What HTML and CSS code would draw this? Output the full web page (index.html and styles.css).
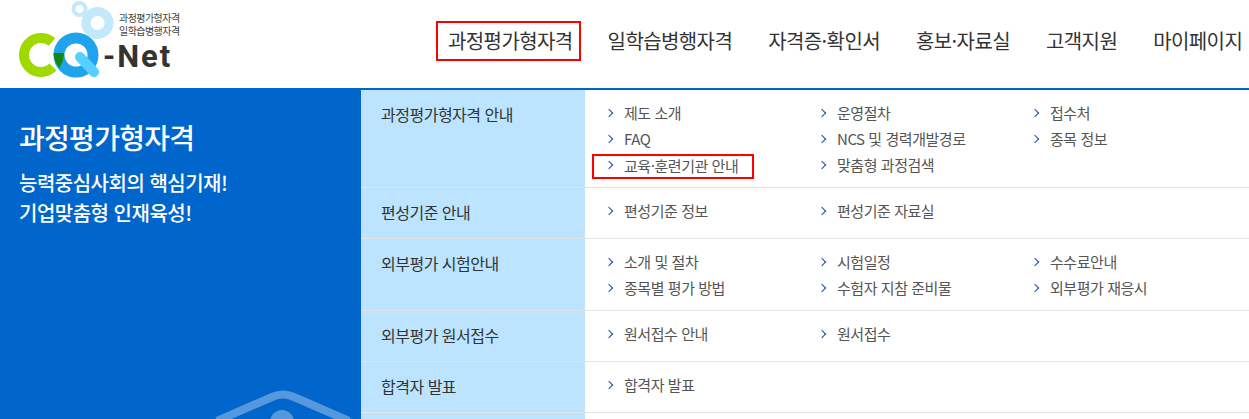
FILE: index.html
```html
<!DOCTYPE html>
<html lang="ko">
<head>
  <meta charset="UTF-8" />
  <title>CQ-Net</title>
  <link rel="stylesheet" href="styles.css">
</head>
<body>
  <header class="header">
    <a class="logo" href="#">
      <svg class="logo-mark" width="120" height="80" viewBox="0 0 120 80">
        <circle cx="79.5" cy="9" r="6" fill="none" stroke="#c4e8fb" stroke-width="4"/>
        <circle cx="97.5" cy="23" r="11.5" fill="none" stroke="#c4e8fb" stroke-width="9"/>
        <path d="M52 42 A17 17 0 1 0 53 67" fill="none" stroke="#9fd900" stroke-width="10"/>
        <circle cx="76" cy="55" r="17" fill="none" stroke="#1fa3ec" stroke-width="11"/>
        <path d="M53.5 53 L64 53 Q63.5 61 59.5 68 Q54 62 53.5 53 Z" fill="#138a0b"/>
        <line x1="80" y1="57" x2="94" y2="72" stroke="#55d0ff" stroke-width="10" stroke-linecap="round"/>
      </svg>
      <span class="logo-sub">과정평가형자격<br>일학습병행자격</span>
      <span class="logo-name">-Net</span>
    </a>
    <nav class="gnb">
      <a class="gnb-item gnb-on" href="#">과정평가형자격</a>
      <a class="gnb-item" href="#">일학습병행자격</a>
      <a class="gnb-item" href="#">자격증·확인서</a>
      <a class="gnb-item" href="#">홍보·자료실</a>
      <a class="gnb-item" href="#">고객지원</a>
      <a class="gnb-item" href="#">마이페이지</a>
    </nav>
  </header>

  <div class="panel">
    <aside class="intro">
      <h2>과정평가형자격</h2>
      <p>능력중심사회의 핵심기재!<br>기업맞춤형 인재육성!</p>
      <svg class="intro-icon" width="140" height="30" viewBox="0 0 140 30">
        <path d="M3 32 L58 8 Q69 3 80 8 L135 32" fill="none" stroke="#5598de" stroke-width="8"/>
        <circle cx="68" cy="33" r="12" fill="#5598de"/>
      </svg>
    </aside>

    <div class="menu">
      <div class="menu-row row-first">
        <div class="menu-title">과정평가형자격 안내</div>
        <ul class="menu-links">
          <li><a href="#">제도 소개</a></li>
          <li><a href="#">운영절차</a></li>
          <li><a href="#">접수처</a></li>
          <li><a href="#">FAQ</a></li>
          <li><a href="#">NCS 및 경력개발경로</a></li>
          <li><a href="#">종목 정보</a></li>
          <li><a class="marked" href="#">교육·훈련기관 안내</a></li>
          <li><a href="#">맞춤형 과정검색</a></li>
        </ul>
      </div>
      <div class="menu-row">
        <div class="menu-title">편성기준 안내</div>
        <ul class="menu-links">
          <li><a href="#">편성기준 정보</a></li>
          <li><a href="#">편성기준 자료실</a></li>
        </ul>
      </div>
      <div class="menu-row row-exam">
        <div class="menu-title">외부평가 시험안내</div>
        <ul class="menu-links">
          <li><a href="#">소개 및 절차</a></li>
          <li><a href="#">시험일정</a></li>
          <li><a href="#">수수료안내</a></li>
          <li><a href="#">종목별 평가 방법</a></li>
          <li><a href="#">수험자 지참 준비물</a></li>
          <li><a href="#">외부평가 재응시</a></li>
        </ul>
      </div>
      <div class="menu-row">
        <div class="menu-title">외부평가 원서접수</div>
        <ul class="menu-links">
          <li><a href="#">원서접수 안내</a></li>
          <li><a href="#">원서접수</a></li>
        </ul>
      </div>
      <div class="menu-row">
        <div class="menu-title">합격자 발표</div>
        <ul class="menu-links">
          <li><a href="#">합격자 발표</a></li>
        </ul>
      </div>
      <div class="menu-row">
        <div class="menu-title"></div>
        <ul class="menu-links"></ul>
      </div>
    </div>
  </div>
</body>
</html>
```

FILE: styles.css
```css
html,
body {
  height: 100%;
}

body {
  margin: 0;
  overflow: hidden;
  font-family: "Noto Sans CJK KR", "Noto Sans", sans-serif;
  color: #333;
  background: #fff;
}

a {
  color: inherit;
  text-decoration: none;
}

.header {
  display: flex;
  height: 88px;
  border-bottom: 2px solid #0066cc;
}

.logo {
  position: relative;
  flex: none;
  width: 436px;
}

.logo-mark {
  position: absolute;
  left: 0;
  top: 0;
}

.logo-sub {
  position: absolute;
  left: 119px;
  top: 11px;
  font-size: 10px;
  line-height: 13px;
  letter-spacing: -0.55px;
  color: #444;
}

.logo-name {
  position: absolute;
  left: 103px;
  top: 37px;
  font-family: Roboto, sans-serif;
  font-size: 31px;
  line-height: 40px;
  font-weight: 700;
  letter-spacing: 2px;
  color: #333;
}

.gnb {
  display: flex;
  align-items: flex-start;
  padding-top: 21px;
  white-space: nowrap;
}

.gnb-item {
  height: 36px;
  padding: 0 11px;
  margin-right: 10px;
  border: 2px solid transparent;
  font-size: 20px;
  line-height: 36px;
  letter-spacing: -0.6px;
  color: #333;
}

.gnb-on {
  margin-right: 14px;
  border-color: #f00;
  padding: 0 6px 0 10px;
}

.panel {
  display: flex;
  height: 329px;
  overflow: hidden;
}

.intro {
  position: relative;
  flex: none;
  width: 361px;
  box-sizing: border-box;
  padding: 27px 0 0 19px;
  background: #0066cc;
  color: #fff;
}

.intro h2 {
  margin: 0 0 11px;
  font-size: 28px;
  line-height: 40px;
  font-weight: 500;
  letter-spacing: -0.7px;
}

.intro p {
  margin: 0;
  font-size: 20px;
  line-height: 30px;
  font-weight: 500;
  letter-spacing: -0.5px;
}

.intro-icon {
  position: absolute;
  left: 214px;
  bottom: 0;
}

.menu {
  flex: 1;
  min-width: 0;
}

.menu-row {
  display: flex;
  border-bottom: 1px solid #e4e4e4;
}

.menu-title {
  flex: none;
  width: 224px;
  box-sizing: border-box;
  padding: 11px 0 11px 20px;
  margin-bottom: -1px;
  border-bottom: 1px solid #e4e4e4;
  background: #bde4ff;
  font-size: 16px;
  line-height: 26px;
  letter-spacing: -0.5px;
  color: #333;
}

.menu-links {
  display: grid;
  flex: 1;
  grid-template-columns: repeat(3, 213px);
  grid-auto-rows: 26px;
  margin: 0;
  padding: 10px 0 14px 20px;
  list-style: none;
  min-height: 26px;
}

.row-first .menu-links {
  padding-bottom: 9px;
}

.row-exam .menu-links {
  padding: 10px 0 9px 20px;
}

.menu-links a {
  position: relative;
  display: inline-block;
  padding-left: 19px;
  font-size: 15px;
  line-height: 26px;
  letter-spacing: -0.45px;
  color: #555;
  white-space: nowrap;
}

.menu-links a::before {
  content: "";
  position: absolute;
  left: 1px;
  top: 10px;
  width: 5px;
  height: 5px;
  border-top: 1px solid #1a4fa0;
  border-right: 1px solid #1a4fa0;
  transform: rotate(45deg);
}

.menu-links a.marked {
  margin: 2px 0 0 -13px;
  padding: 0 14px 0 30px;
  height: 21px;
  line-height: 20px;
  border: 2px solid #f00;
}

.menu-links a.marked::before {
  left: 12px;
  top: 6px;
}
```
